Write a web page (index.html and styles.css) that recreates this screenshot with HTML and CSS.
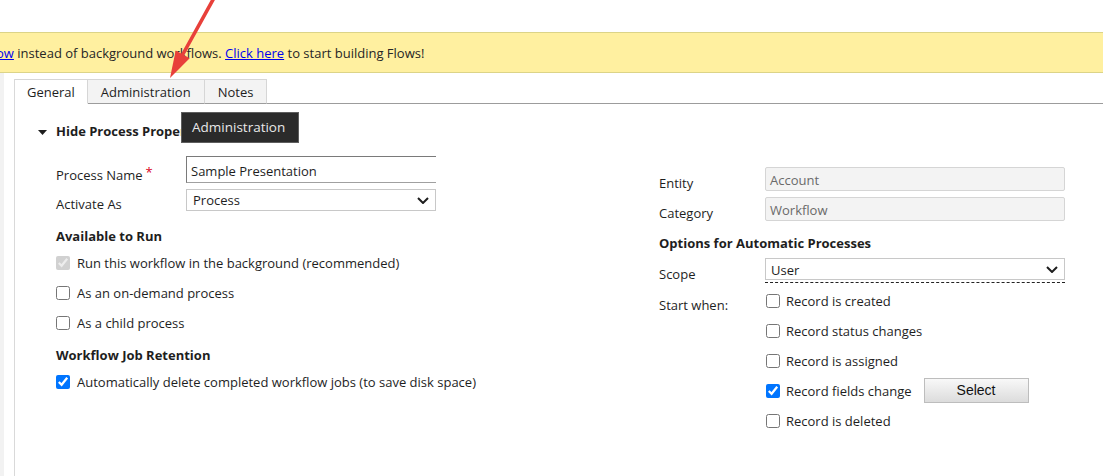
FILE: index.html
```html
<!DOCTYPE html>
<html>
<head>
<meta charset="utf-8">
<title>Process</title>
<link rel="stylesheet" href="styles.css">
</head>
<body>
<div class="page">
  <div class="top"></div>
  <div class="banner"><a href="#">ow</a> instead of background workflows. <a href="#">Click here</a> to start building Flows!</div>
  <div class="main">
    <div class="rail"></div>
    <div class="panel">
      <div class="tabs">
        <div class="tab active">General</div>
        <div class="tab">Administration</div>
        <div class="tab">Notes</div>
        <div class="tab-fill"></div>
      </div>
      <div class="section">
        <div class="section-head">
          <svg class="tri" width="9" height="5" viewBox="0 0 9 5"><polygon points="0,0 9,0 4.5,5" fill="#1e1e1e"/></svg>
          <span>Hide Process Properties</span>
        </div>
        <div class="cols">
          <div class="col">
            <div class="field f-name">
              <div class="label">Process Name<span class="req">*</span></div>
              <div class="input name-input">Sample Presentation</div>
            </div>
            <div class="field f-act">
              <div class="label">Activate As</div>
              <div class="select act-select"><span>Process</span>
                <svg class="chev" width="12" height="7" viewBox="0 0 12 7"><path d="M1 1 L6 6 L11 1" fill="none" stroke="#1e1e1e" stroke-width="2"/></svg>
              </div>
            </div>
            <div class="group-title g-run">Available to Run</div>
            <label class="check c-first"><input type="checkbox" checked disabled><span>Run this workflow in the background (recommended)</span></label>
            <label class="check"><input type="checkbox"><span>As an on-demand process</span></label>
            <label class="check"><input type="checkbox"><span>As a child process</span></label>
            <div class="group-title g-ret">Workflow Job Retention</div>
            <label class="check c-first"><input type="checkbox" checked><span>Automatically delete completed workflow jobs (to save disk space)</span></label>
          </div>
          <div class="col">
            <div class="field f-entity">
              <div class="label rlabel">Entity</div>
              <div class="input ro">Account</div>
            </div>
            <div class="field f-cat">
              <div class="label rlabel">Category</div>
              <div class="input ro">Workflow</div>
            </div>
            <div class="group-title g-opt">Options for Automatic Processes</div>
            <div class="field f-scope">
              <div class="label rlabel">Scope</div>
              <div class="scope-wrap">
                <div class="select scope-select"><span>User</span>
                  <svg class="chev" width="12" height="7" viewBox="0 0 12 7"><path d="M1 1 L6 6 L11 1" fill="none" stroke="#1e1e1e" stroke-width="2"/></svg>
                </div>
              </div>
            </div>
            <div class="field f-start">
              <div class="label rlabel start-label">Start when:</div>
              <div class="checks">
                <label class="check rcheck"><input type="checkbox"><span>Record is created</span></label>
                <label class="check rcheck"><input type="checkbox"><span>Record status changes</span></label>
                <label class="check rcheck"><input type="checkbox"><span>Record is assigned</span></label>
                <label class="check rcheck"><input type="checkbox" checked><span>Record fields change</span><button class="btn" type="button">Select</button></label>
                <label class="check rcheck"><input type="checkbox"><span>Record is deleted</span></label>
              </div>
            </div>
          </div>
        </div>
      </div>
    </div>
  </div>
  <div class="tooltip">Administration</div>
  <svg class="arrow" width="80" height="90" viewBox="150 0 80 90">
    <line x1="214.5" y1="-3" x2="183" y2="54" stroke="#e8403a" stroke-width="3.6" stroke-linecap="round"/>
    <polygon points="170,78 189.7,58.2 175.7,50.4" fill="#e8403a"/>
  </svg>
</div>
</body>
</html>
```
FILE: styles.css
```css
* { box-sizing: border-box; }
html, body { margin: 0; padding: 0; background: #fff; }
body {
  font-family: "Open Sans", "Segoe UI", sans-serif;
  font-size: 13px;
  color: #1e1e1e;
}
.page {
  position: relative;
  width: 1103px;
  height: 476px;
  overflow: hidden;
}
.top { height: 32px; }
.banner {
  height: 41px;
  background: #fff0a0;
  border-top: 1px solid #dcd488;
  border-bottom: 1px solid #dcd488;
  line-height: 40px;
  white-space: nowrap;
  color: #262626;
  text-indent: -4px;
}
.banner a { color: #0000ee; text-decoration: underline; }
.main { display: flex; height: 403px; }
.rail { width: 4px; background: #f2f2f2; }
.panel {
  flex: 1;
  margin-left: 10px;
  margin-top: 6px;
  border-left: 1px solid #d9d9d9;
}
.tabs { display: flex; height: 25px; }
.tab {
  padding: 0 13px;
  border-top: 1px solid #d6d6d6;
  border-right: 1px solid #d6d6d6;
  border-bottom: 1px solid #9c9c9c;
  background: #f3f3f3;
  font-size: 13px;
  line-height: 24px;
  color: #1e1e1e;
}
.tab.active { background: #fff; border-bottom-color: #fff; padding: 0 12px; }
.tab-fill { flex: 1; border-bottom: 1px solid #9c9c9c; }
.section { padding: 17px 0 0 23px; }
.section-head {
  display: flex;
  align-items: center;
  gap: 9px;
  height: 20px;
  line-height: 20px;
  font-weight: 700;
  white-space: nowrap;
}
.tri { margin-top: 3px; }
.cols {
  display: grid;
  grid-template-columns: 380px 406px;
  column-gap: 223px;
  margin: 15px 0 0 18px;
}
.col { display: flex; flex-direction: column; }
.field { display: flex; }
.label { width: 130px; flex: none; line-height: 18px; white-space: nowrap; }
.rlabel { width: 106px; padding-top: 7px; }
.req { color: #d9001b; margin-left: 3px; position: relative; top: -3px; }
.f-name { height: 27px; }
.f-name .label { padding-top: 10px; }
.input {
  flex: 1;
  white-space: nowrap;
  overflow: hidden;
}
.name-input {
  border: 1px solid #7a7a7a;
  border-right: none;
  border-bottom-color: #a0a0a0;
  padding: 3px 4px 0;
  line-height: 22px;
}
.f-act { margin-top: 6px; height: 22px; }
.f-act .label { padding-top: 6px; }
.select {
  flex: 1;
  display: flex;
  align-items: center;
  justify-content: space-between;
  border: 1px solid #c8c8c8;
  background: #fff;
  padding: 0 6px;
  line-height: 20px;
  height: 22px;
}
.group-title { font-weight: 700; line-height: 18px; white-space: nowrap; }
.g-run { margin-top: 16px; }
.g-ret { margin-top: 14px; }
.g-opt { margin-top: 13px; }
.check {
  display: flex;
  align-items: center;
  gap: 7px;
  line-height: 18px;
  margin-top: 12px;
  white-space: nowrap;
}
.c-first { margin-top: 9px; }
.check input { width: 14px; height: 14px; margin: 0; flex: none; }
.f-entity { margin-top: 11px; height: 24px; }
.f-cat { margin-top: 6px; height: 24px; }
.ro {
  background: #f3f3f3;
  border: 1px solid #d5d5d5;
  border-radius: 2px;
  color: #6a6a6a;
  padding: 2px 4px 0;
  line-height: 20px;
}
.f-scope { margin-top: 6px; }
.scope-wrap {
  flex: 1;
  padding-bottom: 1px;
  border-bottom: 1px dashed #222;
}
.scope-select { padding-left: 5px; }
.scope-select span { padding-top: 1px; }
.f-start { margin-top: 9px; }
.start-label { padding-top: 4px; }
.checks { display: flex; flex-direction: column; gap: 12px; }
.rcheck { margin-top: 0; gap: 6px; padding-left: 1px; }
.btn {
  width: 105px;
  height: 25px;
  margin: -4px 0 -3px 6px;
  border: 1px solid #bdbdbd;
  background: linear-gradient(#f8f8f8, #dcdcdc);
  font-family: "Liberation Sans", Arial, sans-serif;
  font-size: 14px;
  color: #111;
  padding: 0 0 2px;
  line-height: 20px;
}
.tooltip {
  position: absolute;
  left: 181px;
  top: 112px;
  width: 118px;
  height: 31px;
  background: #2b2b2b;
  border: 1px solid #5e5e5e;
  color: #e8e8e8;
  font-size: 13.5px;
  line-height: 29px;
  padding-left: 10px;
  white-space: nowrap;
}
.arrow {
  position: absolute;
  left: 150px;
  top: 0;
  pointer-events: none;
}
```
